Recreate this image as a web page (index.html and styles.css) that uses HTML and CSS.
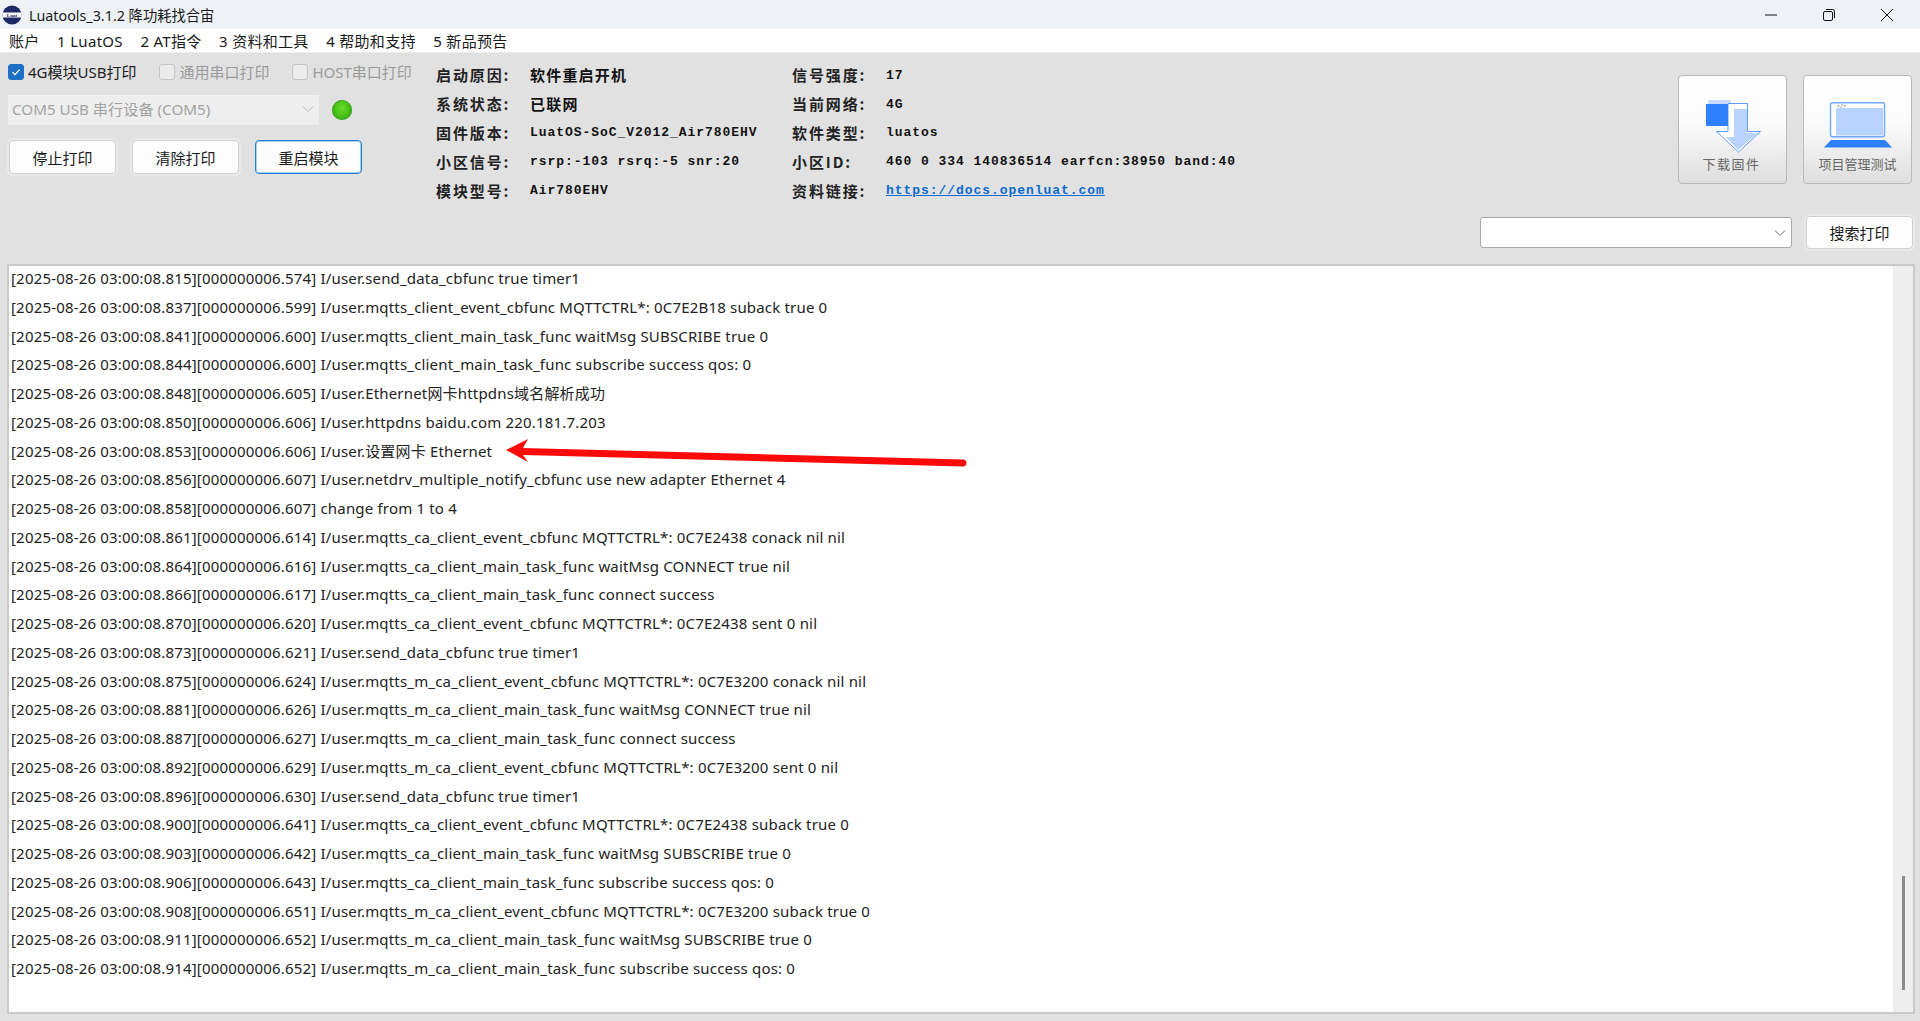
FILE: index.html
```html
<!DOCTYPE html>
<html lang="zh-CN">
<head>
<meta charset="utf-8">
<title>Luatools</title>
<link rel="stylesheet" href="styles.css">
</head>
<body>
<header class="titlebar">
  <svg class="logo" viewBox="0 0 20 20" width="20" height="20">
    <circle cx="10" cy="10" r="9.5" fill="#1d2a66"/>
    <path d="M0.6 7.5H19.4V12.5H0.6Z" fill="#fff"/>
    <text x="10" y="12" text-anchor="middle" class="logo-text">Luat</text>
  </svg>
  <span class="title">Luatools_3.1.2 降功耗找合宙</span>
  <div class="winctl">
    <svg width="14" height="14" viewBox="0 0 14 14"><path d="M1 7H13" stroke="#111" fill="none"/></svg>
    <svg width="14" height="14" viewBox="0 0 14 14"><rect x="1.5" y="3.5" width="9" height="9" rx="1.5" stroke="#111" fill="none"/><path d="M4 1.5H10.5A2 2 0 0 1 12.5 3.5V10" stroke="#111" fill="none"/></svg>
    <svg width="14" height="14" viewBox="0 0 14 14"><path d="M1 1L13 13M13 1L1 13" stroke="#111" fill="none"/></svg>
  </div>
</header>
<nav class="menubar">
  <span>账户</span><span>1 LuatOS</span><span>2 AT指令</span><span>3 资料和工具</span><span>4 帮助和支持</span><span>5 新品预告</span>
</nav>
<main class="panel">
  <section class="left">
    <div class="checks">
      <label class="check"><span class="box on"><svg width="12" height="12" viewBox="0 0 12 12"><path d="M2.5 6.2L5 8.6L9.6 3.6" stroke="#fff" stroke-width="1.2" fill="none"/></svg></span>4G模块USB打印</label>
      <label class="check off"><span class="box"></span>通用串口打印</label>
      <label class="check off"><span class="box"></span>HOST串口打印</label>
    </div>
    <div class="port">
      <div class="select">COM5 USB 串行设备 (COM5)
        <svg width="12" height="8" viewBox="0 0 12 8"><path d="M1 1.5L6 6.5L11 1.5" stroke="#b5b5b5" fill="none"/></svg>
      </div>
      <span class="led"></span>
    </div>
    <div class="buttons">
      <button class="btn">停止打印</button>
      <button class="btn">清除打印</button>
      <button class="btn focus">重启模块</button>
    </div>
  </section>
  <section class="info">
    <span class="k">启动原因:</span><span class="v zh">软件重启开机</span><span class="k">信号强度:</span><span class="v">17</span>
    <span class="k">系统状态:</span><span class="v zh">已联网</span><span class="k">当前网络:</span><span class="v">4G</span>
    <span class="k">固件版本:</span><span class="v">LuatOS-SoC_V2012_Air780EHV</span><span class="k">软件类型:</span><span class="v">luatos</span>
    <span class="k">小区信号:</span><span class="v">rsrp:-103 rsrq:-5 snr:20</span><span class="k">小区ID:</span><span class="v">460 0 334 140836514 earfcn:38950 band:40</span>
    <span class="k">模块型号:</span><span class="v">Air780EHV</span><span class="k">资料链接:</span><a class="v link" href="#">https://docs.openluat.com</a>
  </section>
  <section class="right">
    <div class="tools">
      <button class="tool">
        <svg class="ico-down" width="56" height="53" viewBox="0 0 56 53">
          <rect x="2" y="0" width="23" height="22" fill="#c9dcff"/>
          <path d="M22 3.500H41.500V31.500H54.500L32.500 52L10.500 31.500H22Z" fill="#fff" stroke="#5f9dff"/>
          <path d="M28 9H41V33H52L32 50L20 37H28Z" fill="#b9d3ff"/>
          <rect x="0" y="4" width="22" height="22" fill="#2f80ff"/>
        </svg>
        <span class="wide">下载固件</span>
      </button>
      <button class="tool">
        <svg class="ico-lap" width="70" height="46" viewBox="0 0 70 46">
          <rect x="7.500" y="0.700" width="54" height="34" rx="2" fill="#fff" stroke="#6ea8ff" stroke-width="1.400"/>
          <rect x="13" y="6" width="47" height="27.500" fill="#b9d3ff"/>
          <text x="14" y="5.500" class="code">&lt;/&gt;</text>
          <path d="M8 38H62L69 45.500H1Z" fill="#2f80ff"/>
        </svg>
        <span>项目管理测试</span>
      </button>
    </div>
    <div class="search">
      <div class="combo"><svg width="12" height="8" viewBox="0 0 12 8"><path d="M1 1.500L6 6.500L11 1.500" stroke="#666" fill="none"/></svg></div>
      <button class="btn search-btn">搜索打印</button>
    </div>
  </section>
</main>
<section class="logbox">
  <div class="lines">
    <p>[2025-08-26 03:00:08.815][000000006.574] I/user.send_data_cbfunc true timer1</p>
    <p>[2025-08-26 03:00:08.837][000000006.599] I/user.mqtts_client_event_cbfunc MQTTCTRL*: 0C7E2B18 suback true 0</p>
    <p>[2025-08-26 03:00:08.841][000000006.600] I/user.mqtts_client_main_task_func waitMsg SUBSCRIBE true 0</p>
    <p>[2025-08-26 03:00:08.844][000000006.600] I/user.mqtts_client_main_task_func subscribe success qos: 0</p>
    <p>[2025-08-26 03:00:08.848][000000006.605] I/user.Ethernet网卡httpdns域名解析成功</p>
    <p>[2025-08-26 03:00:08.850][000000006.606] I/user.httpdns baidu.com 220.181.7.203</p>
    <p>[2025-08-26 03:00:08.853][000000006.606] I/user.设置网卡 Ethernet</p>
    <p>[2025-08-26 03:00:08.856][000000006.607] I/user.netdrv_multiple_notify_cbfunc use new adapter Ethernet 4</p>
    <p>[2025-08-26 03:00:08.858][000000006.607] change from 1 to 4</p>
    <p>[2025-08-26 03:00:08.861][000000006.614] I/user.mqtts_ca_client_event_cbfunc MQTTCTRL*: 0C7E2438 conack nil nil</p>
    <p>[2025-08-26 03:00:08.864][000000006.616] I/user.mqtts_ca_client_main_task_func waitMsg CONNECT true nil</p>
    <p>[2025-08-26 03:00:08.866][000000006.617] I/user.mqtts_ca_client_main_task_func connect success</p>
    <p>[2025-08-26 03:00:08.870][000000006.620] I/user.mqtts_ca_client_event_cbfunc MQTTCTRL*: 0C7E2438 sent 0 nil</p>
    <p>[2025-08-26 03:00:08.873][000000006.621] I/user.send_data_cbfunc true timer1</p>
    <p>[2025-08-26 03:00:08.875][000000006.624] I/user.mqtts_m_ca_client_event_cbfunc MQTTCTRL*: 0C7E3200 conack nil nil</p>
    <p>[2025-08-26 03:00:08.881][000000006.626] I/user.mqtts_m_ca_client_main_task_func waitMsg CONNECT true nil</p>
    <p>[2025-08-26 03:00:08.887][000000006.627] I/user.mqtts_m_ca_client_main_task_func connect success</p>
    <p>[2025-08-26 03:00:08.892][000000006.629] I/user.mqtts_m_ca_client_event_cbfunc MQTTCTRL*: 0C7E3200 sent 0 nil</p>
    <p>[2025-08-26 03:00:08.896][000000006.630] I/user.send_data_cbfunc true timer1</p>
    <p>[2025-08-26 03:00:08.900][000000006.641] I/user.mqtts_ca_client_event_cbfunc MQTTCTRL*: 0C7E2438 suback true 0</p>
    <p>[2025-08-26 03:00:08.903][000000006.642] I/user.mqtts_ca_client_main_task_func waitMsg SUBSCRIBE true 0</p>
    <p>[2025-08-26 03:00:08.906][000000006.643] I/user.mqtts_ca_client_main_task_func subscribe success qos: 0</p>
    <p>[2025-08-26 03:00:08.908][000000006.651] I/user.mqtts_m_ca_client_event_cbfunc MQTTCTRL*: 0C7E3200 suback true 0</p>
    <p>[2025-08-26 03:00:08.911][000000006.652] I/user.mqtts_m_ca_client_main_task_func waitMsg SUBSCRIBE true 0</p>
    <p>[2025-08-26 03:00:08.914][000000006.652] I/user.mqtts_m_ca_client_main_task_func subscribe success qos: 0</p>
  </div>
  <div class="scrollbar"><span class="thumb"></span></div>
</section>
<svg class="arrow" width="470" height="40" viewBox="0 0 470 40">
  <path d="M6 15L28 4L23 13L463 24.500A3.500 3.500 0 0 1 463 31.500L23 20L28 27Z" fill="#fb0a0a"/>
</svg>
</body>
</html>
```

FILE: styles.css
```css
* { box-sizing: border-box; }
html, body { margin: 0; height: 100%; }
body {
  display: flex;
  flex-direction: column;
  height: 100vh;
  overflow: hidden;
  position: relative;
  background: #e1e1e1;
  color: #1a1a1a;
  font-family: "Noto Sans", "Noto Sans CJK SC", sans-serif;
  font-size: 14px;
}
button { font-family: inherit; padding: 0; cursor: default; }

.titlebar {
  display: flex;
  align-items: center;
  height: 29px;
  flex: none;
  background: #eef2f7;
  padding-left: 2px;
}
.logo { flex: none; }
.logo-text { font: bold 5px "Liberation Serif", serif; fill: #1d2a66; }
.title { margin-left: 7px; font-size: 14.3px; color: #1a1a1a; }
.winctl { margin-left: auto; display: flex; gap: 44px; padding-right: 26px; }

.menubar {
  display: flex;
  align-items: center;
  gap: 17.5px;
  height: 24px;
  flex: none;
  padding-left: 9px;
  background: #fff;
  border-bottom: 1px solid #ececec;
  font-size: 15px;
  letter-spacing: 0.3px;
}

.panel {
  display: flex;
  flex: none;
  height: 211px;
}
.left { width: 436px; flex: none; padding: 9px 0 0 8px; }
.checks { display: flex; gap: 23px; height: 19px; align-items: center; }
.check { display: flex; align-items: center; gap: 4px; font-size: 15px; color: #222; }
.check.off { color: #9a9a9a; }
.box {
  width: 16px; height: 16px; border-radius: 3px;
  border: 1px solid #c4c4c4; background: #ececec;
  display: flex; align-items: center; justify-content: center;
}
.box.on { background: #1d6fc4; border-color: #1d6fc4; }
.port { display: flex; align-items: center; margin-top: 14px; gap: 13px; }
.select {
  width: 311px; height: 30px; background: #eeeeee;
  color: #a2a2a2; font-size: 15.2px; line-height: 28px;
  display: flex; align-items: center; justify-content: space-between;
  padding: 0 5px 2px 4px;
}
.led {
  width: 20px; height: 20px; border-radius: 50%;
  background: radial-gradient(ellipse at 50% 40%, #6cdb2e 0, #45bd14 55%, #2c9c18 100%);
  box-shadow: inset 0 0 2px #1d8a1d;
}
.buttons { display: flex; gap: 16px; margin-top: 15px; padding-left: 1px; }
.btn {
  width: 107px; height: 34px;
  border: 1px solid #d0d0d0; border-radius: 4px;
  background: #fdfdfd; color: #1a1a1a; font-size: 15px;
  box-shadow: 0 0 0 2px #e9e9e9;
}
.btn.focus { border-color: #1f7fd4; box-shadow: inset 0 0 0 1px #a9cfee; }

.info {
  display: grid;
  grid-template-columns: 94px 262px 94px auto;
  grid-auto-rows: 28.8px;
  align-items: center;
  align-content: start;
  padding-top: 7.5px;
  flex: none;
}
.k {
  font-family: "Noto Sans CJK SC", sans-serif;
  font-weight: 700; font-size: 15px; letter-spacing: 1.9px; color: #222;
}
.v {
  font-family: "Liberation Mono", monospace;
  font-weight: 700; font-size: 13px; letter-spacing: 0.95px; color: #111;
  padding-top: 1px;
}
.v.zh { font-family: "Noto Sans CJK SC", sans-serif; font-size: 15px; letter-spacing: 1.2px; padding-top: 0; }
.link { color: #0b6bd0; }

.right {
  margin-left: auto;
  display: flex; flex-direction: column; align-items: flex-end;
  padding: 22px 8px 0 0;
}
.tools { display: flex; gap: 16px; }
.tool {
  width: 109px; height: 109px;
  border: 1px solid #b9b9b9; border-radius: 4px;
  background: linear-gradient(#fff 0, #fbfbfb 45%, #dedede 100%);
  display: flex; flex-direction: column; align-items: center;
  color: #666; font-size: 13px;
  padding-top: 24px; position: relative;
}
.ico-down { margin-left: 3px; }
.ico-lap { margin-top: 2px; }
.tool span { position: absolute; top: 78px; white-space: nowrap; }
.tool span.wide { letter-spacing: 1.5px; margin-left: -2px; }
.code { font: 5px "Liberation Mono", monospace; fill: #444; }

.search { display: flex; align-items: center; gap: 14px; margin-top: 32px; margin-right: -1px; }
.combo {
  width: 312px; height: 31px; background: #fff;
  border: 1px solid #a9a9a9; border-radius: 3px;
  display: flex; align-items: center; justify-content: flex-end; padding-right: 5px;
}
.search-btn { height: 33px; }

.logbox {
  flex: 1;
  margin: 0 5px 7px 7px;
  background: #fff;
  border: 2px solid #c9c9cc;
  display: flex;
  min-height: 0;
}
.lines { flex: 1; padding: 0 0 0 2px; min-width: 0; }
.lines p {
  margin: 0; height: 28.75px; line-height: 24.5px;
  font-size: 15px; letter-spacing: 0.18px; white-space: nowrap; color: #222;
}
.scrollbar { width: 20px; flex: none; background: #eeeeee; position: relative; }
.thumb {
  position: absolute; left: 9px; bottom: 22px;
  width: 3px; height: 114px; background: #8b8b8b;
}
.arrow { position: absolute; left: 500px; top: 435px; }
```
